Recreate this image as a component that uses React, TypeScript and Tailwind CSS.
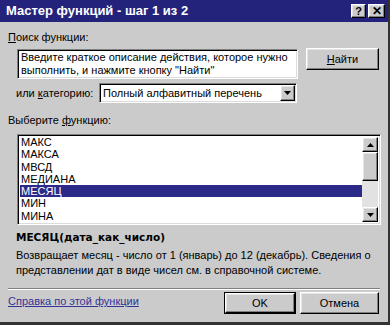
const items = ['МАКС', 'МАКСА', 'МВСД', 'МЕДИАНА', 'МЕСЯЦ', 'МИН', 'МИНА'];

const sunken =
  'border border-t-[#808080] border-l-[#808080] border-b-white border-r-white shadow-[inset_1px_1px_0_#000,inset_-1px_-1px_0_#dcdcdc]';
const raised =
  'border border-t-white border-l-white border-b-black border-r-black shadow-[inset_-1px_-1px_0_#808080,inset_1px_1px_0_#e4e4e4]';

function ArrowDown() {
  return (
    <svg width="7" height="4" viewBox="0 0 7 4">
      <path d="M0 0h7L3.5 4z" fill="#000" />
    </svg>
  );
}

function ArrowUp() {
  return (
    <svg width="7" height="4" viewBox="0 0 7 4">
      <path d="M0 4h7L3.5 0z" fill="#000" />
    </svg>
  );
}

export default function App() {
  return (
    <div
      className="flex h-[325px] w-[390px] flex-col overflow-hidden border-r-2 border-b-[3px] border-r-[#333] border-b-[#333] bg-[#cbcbcb] text-[11px] whitespace-nowrap text-black"
      style={{ fontFamily: '"Liberation Sans", Arial, sans-serif' }}
    >
      {/* title bar */}
      <div className="flex h-[22px] shrink-0 items-center justify-between bg-[#23237c] pr-[3px] pl-[6px]">
        <span className="text-[13px] font-bold text-white">Мастер функций - шаг 1 из 2</span>
        <div className="flex gap-[2px]">
          <div className={`flex h-[14px] w-[15px] items-center justify-center bg-[#cbcbcb] text-[11px] font-bold leading-none ${raised}`}>?</div>
          <div className={`flex h-[14px] w-[17px] items-center justify-center bg-[#cbcbcb] text-[12px] font-bold leading-none ${raised}`}>✕</div>
        </div>
      </div>

      <div className="flex flex-1 flex-col px-[8px]">
        <div className="mt-[9px] leading-[13px]">
          <span className="underline">П</span>оиск функции:
        </div>

        <div className="mt-[5px] flex items-start">
          <div className={`ml-[9px] h-[30px] w-[281px] bg-white px-[3px] pt-[1px] leading-[13px] ${sunken}`}>
            Введите краткое описание действия, которое нужно
            <br />
            выполнить, и нажмите кнопку "Найти"
          </div>
          <div className={`ml-auto mr-[1px] -mt-[1px] flex h-[22px] w-[73px] items-center justify-center bg-[#cbcbcb] ${raised}`}>
            <span>
              <span className="underline">Н</span>айти
            </span>
          </div>
        </div>

        <div className="mt-[4px] flex items-center">
          <span className="ml-[8px] w-[83px]">
            или <span className="underline">к</span>атегорию:
          </span>
          <div className={`flex h-[20px] w-[198px] items-center bg-white pl-[3px] ${sunken}`}>
            <span className="flex-1">Полный алфавитный перечень</span>
            <div className={`mr-[1px] flex h-[16px] w-[15px] items-center justify-center bg-[#cbcbcb] ${raised}`}>
              <ArrowDown />
            </div>
          </div>
        </div>

        <div className="mt-[11px] leading-[13px]">
          Выберите <span className="underline">ф</span>ункцию:
        </div>

        <div className={`mt-[7px] ml-[9px] flex h-[91px] w-[364px] shrink-0 bg-white px-[2px] pt-[1px] pb-[2px] ${sunken}`}>
          <div className="flex-1 overflow-hidden leading-[12.3px]">
            {items.map((it) => (
              <div
                key={it}
                className={it === 'МЕСЯЦ' ? 'h-[12.3px] bg-[#2c2a88] pl-[1px] text-white' : 'h-[12.3px] pl-[1px]'}
              >
                {it}
              </div>
            ))}
          </div>
          <div className="mt-[1px] flex w-[16px] flex-col bg-[#e2e2e2]">
            <div className={`flex h-[15px] items-center justify-center bg-[#cbcbcb] ${raised}`}>
              <ArrowUp />
            </div>
            <div className={`h-[29px] bg-[#cbcbcb] ${raised}`} />
            <div className="flex-1" />
            <div className={`flex h-[15px] items-center justify-center bg-[#cbcbcb] ${raised}`}>
              <ArrowDown />
            </div>
          </div>
        </div>

        <div
          className="mt-[5px] ml-[8px] text-[10.5px] font-bold leading-[14px]"
          style={{ fontFamily: '"DejaVu Sans", Verdana, sans-serif' }}
        >
          МЕСЯЦ(дата_как_число)
        </div>
        <div className="mt-[4px] ml-[8px] leading-[15px]">
          Возвращает месяц - число от 1 (январь) до 12 (декабрь). Сведения о
          <br />
          представлении дат в виде чисел см. в справочной системе.
        </div>

        <div className="mt-[10px] h-[2px] border-t border-b border-t-[#808080] border-b-white" />

        <div className="mt-[2px] flex items-center">
          <span className="-mt-[3px] text-[#33339a] underline">Справка по этой функции</span>
          <div className="ml-auto mr-[1px] flex gap-[4px]">
            <div className="border border-black">
              <div className={`flex h-[20px] w-[70px] items-center justify-center bg-[#cbcbcb] ${raised}`}>OK</div>
            </div>
            <div className={`flex h-[22px] w-[79px] items-center justify-center bg-[#cbcbcb] ${raised}`}>Отмена</div>
          </div>
        </div>
      </div>
    </div>
  );
}
